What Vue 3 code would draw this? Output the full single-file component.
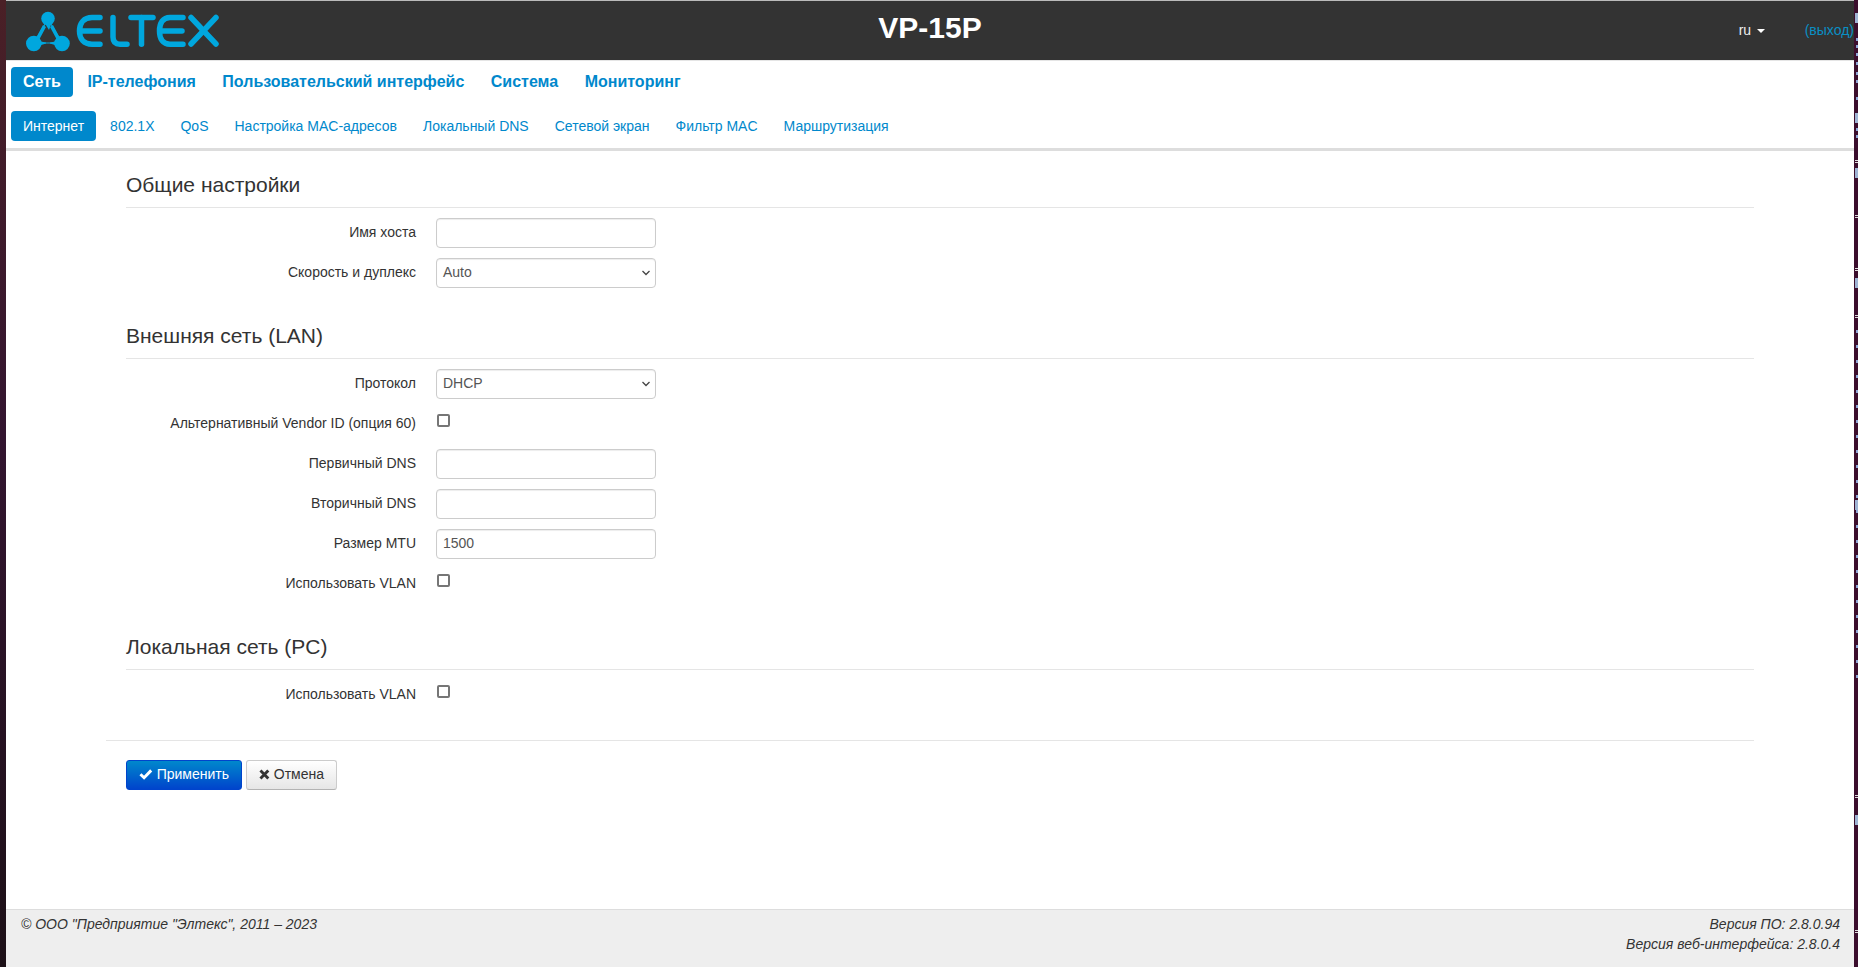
<script setup>
const mainTabs = ['IP-телефония', 'Пользовательский интерфейс', 'Система', 'Мониторинг']
const subTabs = ['802.1X', 'QoS', 'Настройка MAC-адресов', 'Локальный DNS', 'Сетевой экран', 'Фильтр MAC', 'Маршрутизация']
const sections = [
  { title: 'Общие настройки', rows: [
    { label: 'Имя хоста', type: 'input', value: '' },
    { label: 'Скорость и дуплекс', type: 'select', value: 'Auto' },
  ] },
  { title: 'Внешняя сеть (LAN)', rows: [
    { label: 'Протокол', type: 'select', value: 'DHCP' },
    { label: 'Альтернативный Vendor ID (опция 60)', type: 'check' },
    { label: 'Первичный DNS', type: 'input', value: '' },
    { label: 'Вторичный DNS', type: 'input', value: '' },
    { label: 'Размер MTU', type: 'input', value: '1500' },
    { label: 'Использовать VLAN', type: 'check' },
  ] },
  { title: 'Локальная сеть (PC)', rows: [
    { label: 'Использовать VLAN', type: 'check' },
  ] },
]
const marks = [
  ...[38, 45, 53, 62, 72, 80, 97, 128, 135].map((y) => ({ y, kind: 'dot' })),
  ...[13, 113, 168, 278, 500, 815].map((y) => ({ y, kind: 'block' })),
  ...[160, 215, 268, 315, 795, 930].map((y) => ({ y, kind: 'bar' })),
  ...Array.from({ length: 24 }, (_, i) => ({ y: 330 + i * 15, kind: 'dot' })),
]
</script>

<template>
  <div class="desk">
    <div class="strip-left"></div>
    <div class="page">
      <header class="top">
        <svg class="logo" width="196" height="44" viewBox="0 0 196 44" fill="none">
          <g stroke="#00a7de" stroke-width="1.2">
            <path d="M22 10 L8 34 L36 34 Z"/>
          </g>
          <g fill="#00a7de">
            <path d="M18 13 L26 13 L23 21 Z M3 30 L12 28 L14 33 Z"/>
            <path d="M32 28 L41 30 L30 33 Z M12 32 L20 33.5 L20 34.5 L12 37 Z M32 32 L24 33.5 L24 34.5 L32 37 Z"/>
            <path d="M17 16 L10 29 L13 31 L20 18 Z M27 16 L34 29 L31 31 L24 18 Z"/>
            <circle cx="22" cy="9.5" r="6.8"/>
            <circle cx="7.8" cy="34.5" r="7.8"/>
            <circle cx="36" cy="34.5" r="7.8"/>
          </g>
          <g stroke="#00a7de" stroke-width="5.5" stroke-linecap="round" stroke-linejoin="round">
            <path d="M74 8.5 H66 C58 8.5 53.5 14 53.5 22 C53.5 30 58 35.2 66 35.2 H74"/>
            <path d="M56 22 H74"/>
            <path d="M87 8.5 V28 C87 33 89.5 35.2 94 35.2 H101"/>
            <path d="M105 8.5 H127"/>
            <path d="M115.5 8.5 V35.2"/>
            <path d="M157 8.5 H144 C137 8.5 133.5 14 133.5 22 C133.5 30 137 35.2 144 35.2 H157"/>
            <path d="M136 22 H156"/>
            <path d="M165 8.5 L190 35"/>
            <path d="M190 8.5 L165 35"/>
          </g>
        </svg>
        <h1 class="brand">VP-15P</h1>
        <div class="top-right">
          <span class="lang">ru<i class="caret"></i></span>
          <a class="logout">(выход)</a>
        </div>
      </header>

      <nav class="tabs main-tabs">
        <a class="tab active">Сеть</a>
        <a v-for="t in mainTabs" :key="t" class="tab">{{ t }}</a>
      </nav>
      <nav class="tabs sub-tabs">
        <a class="tab active">Интернет</a>
        <a v-for="t in subTabs" :key="t" class="tab">{{ t }}</a>
      </nav>

      <main class="content">
        <section v-for="s in sections" :key="s.title" class="section">
          <h2 class="legend">{{ s.title }}</h2>
          <div v-for="r in s.rows" :key="r.label" class="row">
            <label class="label">{{ r.label }}</label>
            <input v-if="r.type === 'input'" class="control" type="text" :value="r.value" />
            <div v-else-if="r.type === 'select'" class="control select">
              <span>{{ r.value }}</span>
              <svg width="10" height="6" viewBox="0 0 10 6" fill="none"><path d="M1.5 1 L5 4.5 L8.5 1" stroke="#444" stroke-width="1.3"/></svg>
            </div>
            <div v-else class="check-wrap"><input class="check" type="checkbox" /></div>
          </div>
        </section>
        <div class="actions">
          <button class="btn primary" type="button">
            <svg width="14" height="12" viewBox="0 0 14 12"><path d="M1.5 6.2 L5.2 9.8 L12.5 2.3" fill="none" stroke="#fff" stroke-width="3"/></svg>
            Применить
          </button>
          <button class="btn plain" type="button">
            <svg width="11" height="11" viewBox="0 0 11 11"><path d="M1.5 1.5 L9.5 9.5 M9.5 1.5 L1.5 9.5" fill="none" stroke="#333" stroke-width="3"/></svg>
            Отмена
          </button>
        </div>
      </main>

      <footer class="foot">
        <div>© ООО "Предприятие "Элтекс", 2011 – 2023</div>
        <div class="versions">
          <div>Версия ПО: 2.8.0.94</div>
          <div>Версия веб-интерфейса: 2.8.0.4</div>
        </div>
      </footer>
    </div>
    <div class="strip-right">
      <i v-for="m in marks" :key="m.y" :class="['mark', m.kind]" :style="{ top: m.y + 'px' }"></i>
    </div>
  </div>
</template>

<style>
html, body { margin: 0; padding: 0; overflow: hidden; }
</style>

<style scoped>
.desk {
  display: flex;
  width: 1858px;
  height: 967px;
  font-family: "Liberation Sans", Arial, sans-serif;
  font-size: 14px;
  color: #333;
  background: #fff;
}
.strip-left {
  width: 6px;
  flex: none;
  background: linear-gradient(180deg, #4a2026 0%, #331530 45%, #1c1017 100%);
}
.strip-right {
  position: relative;
  width: 4px;
  flex: none;
  background: #3b0e2d;
}
.mark { position: absolute; right: 0; display: block; }
.mark.dot { width: 2px; height: 3px; background: #8fa6d6; }
.mark.block { width: 3px; height: 10px; background: #9fb4d4; }
.mark.bar { width: 3px; height: 3px; border-top: 1px solid #ddd; border-bottom: 1px solid #ddd; box-sizing: border-box; }
.page {
  flex: 1;
  min-width: 0;
  display: flex;
  flex-direction: column;
  overflow: hidden;
}
.top {
  position: relative;
  height: 59px;
  flex: none;
  background: #333;
  display: flex;
  align-items: center;
  justify-content: space-between;
  border-top: 1px solid #bbb;
  border-bottom: 1px solid #e5e5e5;
}
.logo { margin: 0 0 0 20px; flex: none; }
.brand {
  position: absolute;
  left: 0;
  right: 0;
  top: 10px;
  margin: 0;
  text-align: center;
  font-size: 30px;
  line-height: 34px;
  font-weight: 700;
  color: #fff;
}
.top-right { display: flex; align-items: center; font-size: 14px; margin-top: -1px; }
.lang { color: #eee; width: 66px; }
.caret {
  display: inline-block;
  margin-left: 6px;
  vertical-align: middle;
  border-top: 4px solid #fff;
  border-left: 4px solid transparent;
  border-right: 4px solid transparent;
}
.logout { color: #0a8fc4; white-space: nowrap; }
.tabs { display: flex; gap: 2px; padding-left: 5px; flex: none; }
.tab {
  display: block;
  color: #0088cc;
  padding: 0 12px;
  border-radius: 4px;
  white-space: nowrap;
}
.tab.active { background: #0088cc; color: #fff; }
.main-tabs { gap: 2.5px; padding-top: 6px; font-size: 16px; font-weight: 700; }
.main-tabs .tab { line-height: 30px; }
.sub-tabs {
  padding-top: 14px;
  padding-bottom: 7px;
  border-bottom: 3px solid #ddd;
}
.sub-tabs .tab { line-height: 30px; }
.content { flex: 1; padding: 0 100px 0 120px; }
.section { padding-bottom: 4px; }
.legend {
  margin: 0 0 10px;
  padding: 20px 0 9px;
  font-size: 21px;
  line-height: 27px;
  font-weight: 400;
  color: #333;
  border-bottom: 1px solid #e5e5e5;
}
.row { display: flex; align-items: flex-start; height: 30px; margin-bottom: 10px; }
.label { width: 290px; text-align: right; line-height: 28px; flex: none; }
.control {
  margin-left: 20px;
  width: 220px;
  height: 30px;
  box-sizing: border-box;
  border: 1px solid #ccc;
  border-radius: 4px;
  padding: 0 6px 2px;
  font: inherit;
  font-size: 14px;
  color: #555;
  background: #fff;
  box-shadow: inset 0 1px 1px rgba(0, 0, 0, 0.075);
  outline: none;
}
.select {
  display: flex;
  align-items: center;
  justify-content: space-between;
  padding: 0 4px 0 6px;
  line-height: 26px;
}
.select span { margin-top: -3px; }
.check-wrap { margin-left: 21px; height: 30px; }
.check {
  display: block;
  appearance: none;
  -webkit-appearance: none;
  margin: 5px 0 0;
  width: 13px;
  height: 13px;
  box-sizing: border-box;
  border: 2px solid #767676;
  border-radius: 2px;
  background: #fff;
}
.actions {
  margin: 16px 0 0 -20px;
  padding: 19px 0 0 20px;
  border-top: 1px solid #e5e5e5;
  display: flex;
  gap: 4px;
}
.btn {
  height: 30px;
  box-sizing: border-box;
  border-radius: 3px;
  font: inherit;
  font-size: 14px;
  display: inline-flex;
  align-items: center;
  gap: 4px;
  padding: 0 12px 2px;
}
.primary {
  width: 116px;
  color: #fff;
  border: 1px solid #0044cc;
  background: linear-gradient(180deg, #0088cc, #0044cc);
}
.plain {
  width: 91px;
  color: #333;
  border: 1px solid #ccc;
  border-bottom-color: #b3b3b3;
  background: linear-gradient(180deg, #fff, #e6e6e6);
}
.foot {
  height: 53px;
  flex: none;
  display: flex;
  justify-content: space-between;
  padding: 4px 14px 0 15px;
  background: #eee;
  border-top: 1px solid #ddd;
  font-style: italic;
  font-size: 14px;
  line-height: 20px;
  color: #333;
}
.versions { text-align: right; }
</style>
